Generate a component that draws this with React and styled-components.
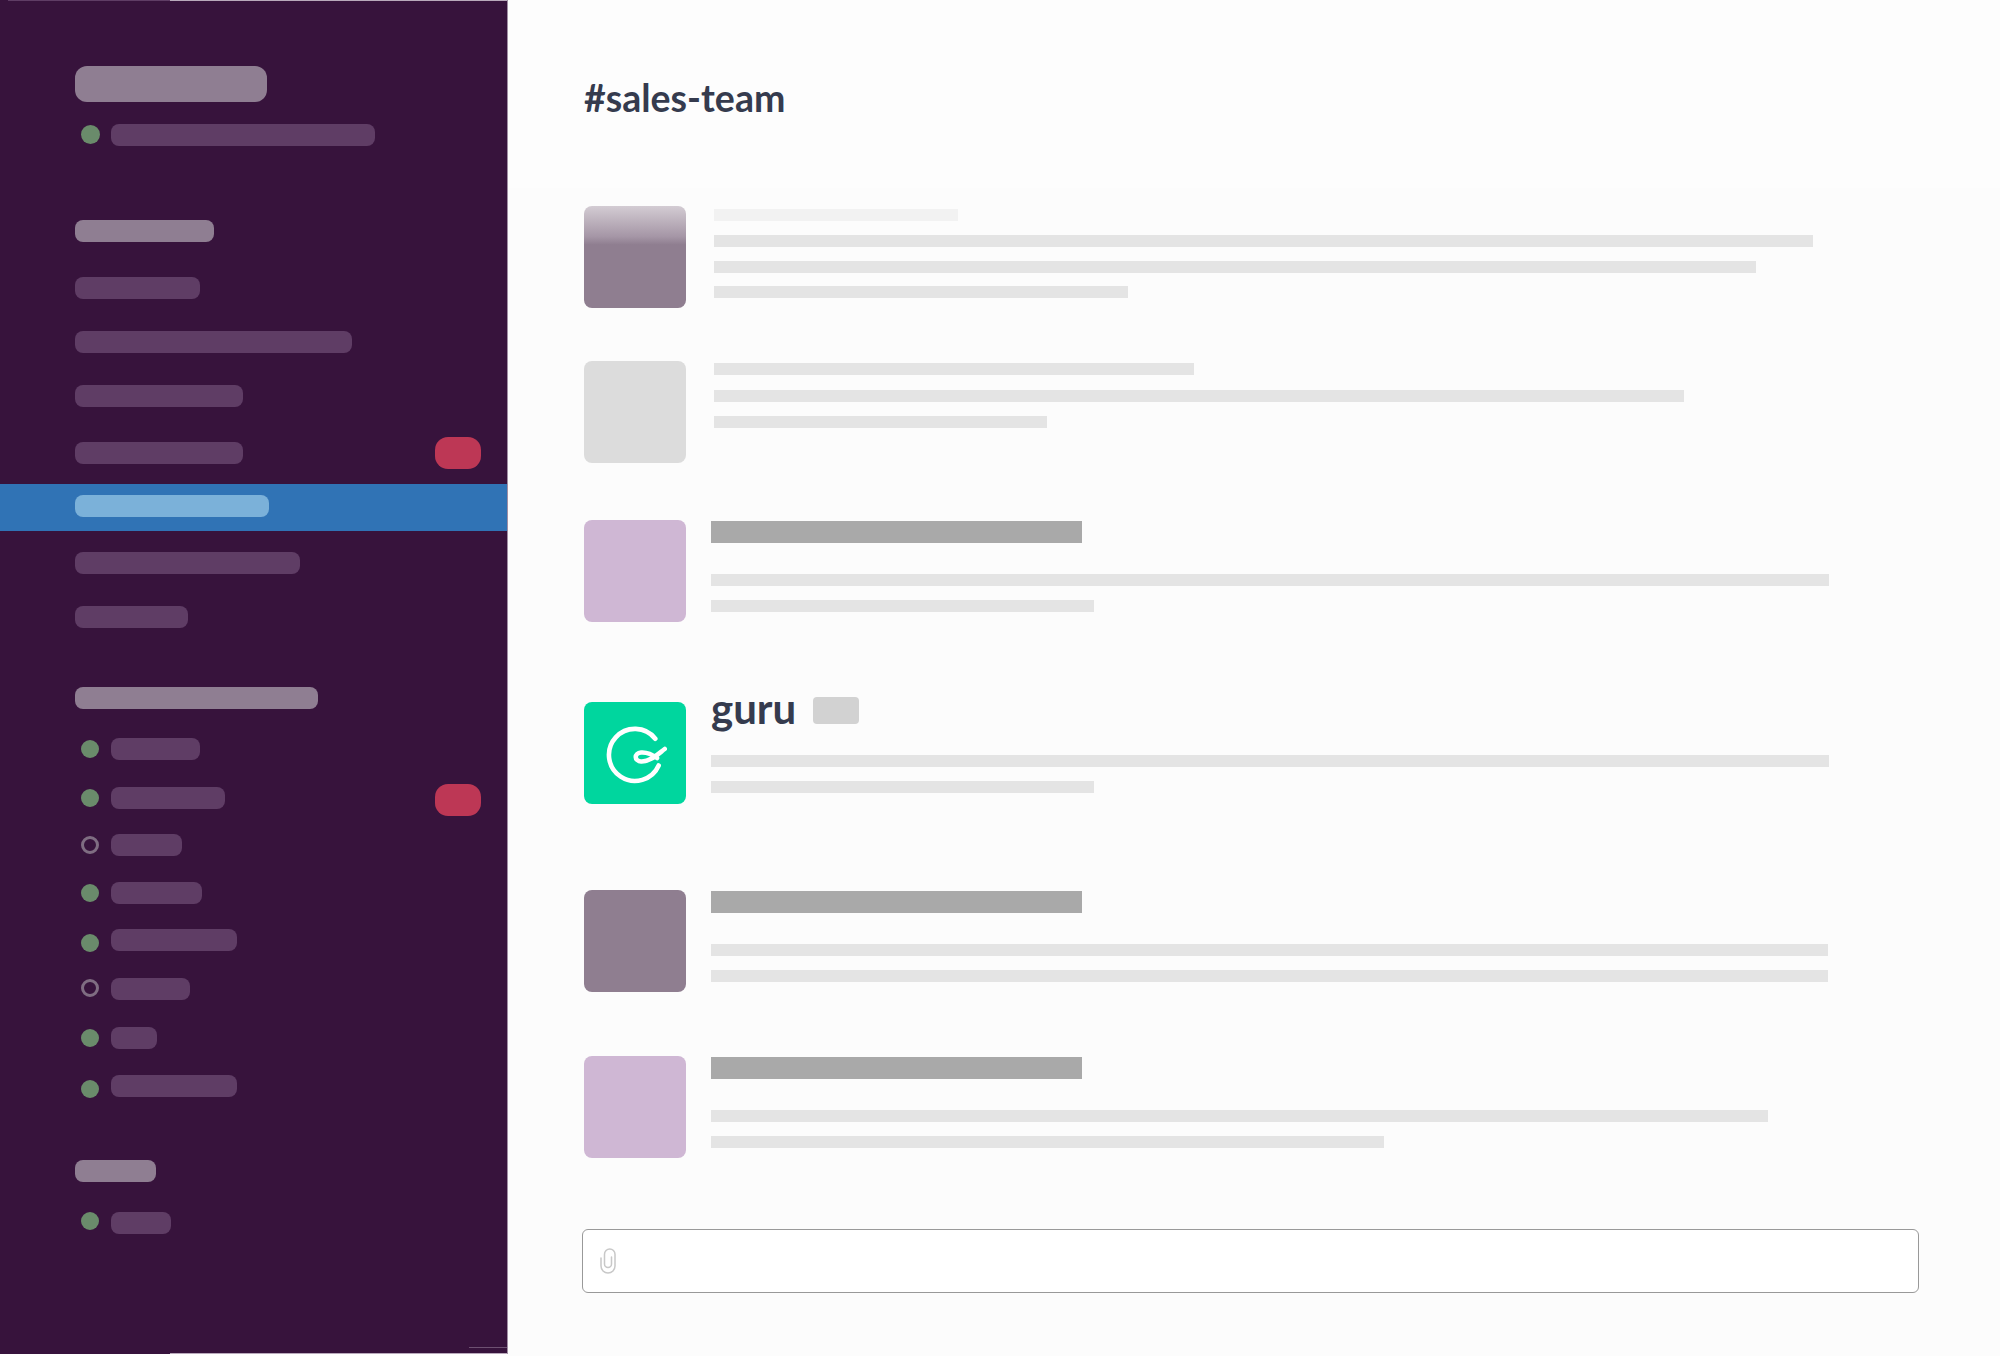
import React from "react";
import styled, { createGlobalStyle } from "styled-components";

const GlobalStyle = createGlobalStyle`
  html, body {
    margin: 0;
    padding: 0;
    background: #fefefe;
    font-family: "Lato", "Liberation Sans", sans-serif;
  }
`;

const Page = styled.div`
  display: flex;
  width: 2000px;
  height: 1356px;
  overflow: hidden;
`;

const Sidebar = styled.aside`
  position: relative;
  display: flex;
  flex-direction: column;
  flex-shrink: 0;
  box-sizing: border-box;
  width: 508px;
  height: 1354px;
  padding-top: 66px;
  background: #37133c;
  border-right: 1px solid #a08ea3;
`;

// hairlines left over from the original image's crop
const EdgeLine = styled.span`
  position: absolute;
  left: ${(p) => p.$left}px;
  right: ${(p) => p.$right ?? 0}px;
  top: ${(p) => p.$top}px;
  height: 1px;
  background: ${(p) => p.$color};
`;

const SideRow = styled.div`
  display: flex;
  align-items: center;
  justify-content: space-between;
  height: ${(p) => p.$height ?? 22}px;
  margin-top: ${(p) => p.$mt ?? 0}px;
  padding: 0 26px 0 75px;
`;

const ActiveRow = styled(SideRow)`
  box-sizing: border-box;
  height: 47px;
  padding-top: 11px;
  padding-bottom: 14px;
  background: #3073b5;
`;

const Group = styled.div`
  display: flex;
  align-items: center;
`;

const Bar = styled.span`
  display: block;
  width: ${(p) => p.$w}px;
  height: ${(p) => p.$h ?? 22}px;
  border-radius: ${(p) => p.$r ?? 8}px;
  background: ${(p) =>
    p.$kind === "bright" ? "#8f7e92" : p.$kind === "active" ? "#7bb1d9" : "#5f3d65"};
`;

const Badge = styled.span`
  display: block;
  width: 46px;
  height: 32px;
  margin-top: ${(p) => p.$mt ?? 0}px;
  border-radius: 13px;
  background: #bd3755;
`;

const Dot = styled.span`
  display: block;
  box-sizing: border-box;
  width: ${(p) => p.$size ?? 18}px;
  height: ${(p) => p.$size ?? 18}px;
  margin: ${(p) => p.$mt ?? 0}px ${(p) => 36 - 6 - (p.$size ?? 18)}px 0 6px;
  border-radius: 50%;
  background: ${(p) => (p.$away ? "transparent" : "#6a8b6b")};
  border: ${(p) => (p.$away ? "3px solid #7f6d82" : "none")};
`;

const Main = styled.main`
  flex: 1;
  display: flex;
  flex-direction: column;
  background: #fcfcfc;
`;

const Header = styled.header`
  box-sizing: border-box;
  height: 188px;
  padding: 74px 0 0 76px;
  background: #fdfdfd;
`;

const Title = styled.h1`
  margin: 0;
  font-size: 37.5px;
  line-height: 48px;
  font-weight: 700;
  color: #353b4e;
`;

const Messages = styled.div`
  display: flex;
  flex-direction: column;
  padding-left: 76px;
`;

const Message = styled.div`
  display: flex;
  align-items: flex-start;
  height: 102px;
  margin-top: ${(p) => p.$mt}px;
`;

const Avatar = styled.div`
  display: flex;
  flex-shrink: 0;
  width: 102px;
  height: 102px;
  border-radius: 8px;
  overflow: hidden;
  background: ${(p) => p.$bg};
`;

const Body = styled.div`
  display: flex;
  flex-direction: column;
  align-items: flex-start;
  margin-top: ${(p) => p.$mt ?? 1}px;
  margin-left: ${(p) => p.$ml ?? 25}px;
`;

const Line = styled.span`
  display: block;
  width: ${(p) => p.$w}px;
  height: 12px;
  margin-top: ${(p) => p.$mt ?? 14}px;
  background: ${(p) => p.$color ?? "#e4e4e4"};
`;

const Heading = styled.span`
  display: block;
  width: 371px;
  height: 22px;
  background: #a9a9a9;
`;

const NameRow = styled.div`
  display: flex;
  align-items: center;
  height: 27px;
`;

const Name = styled.span`
  width: 84px;
  margin: 0 18px 5px 0;
  font-size: 42px;
  line-height: 27px;
  font-weight: 700;
  color: #353b4e;
`;

const Tag = styled.span`
  display: block;
  width: 46px;
  height: 27px;
  border-radius: 4px;
  background: #d2d2d2;
`;

const Composer = styled.div`
  display: flex;
  align-items: center;
  box-sizing: border-box;
  width: 1337px;
  height: 64px;
  margin: 71px 0 0 74px;
  padding-left: 17px;
  background: #fff;
  border: 1px solid #999;
  border-radius: 6px;
`;

const GuruLogo = () => (
  <svg width="102" height="102" viewBox="0 0 102 102" fill="none" stroke="#fff" strokeWidth="4.6" strokeLinecap="round">
    <path d="M71.3 36.7A26 26 0 1 0 74.7 63.5" />
    <path d="M80.7 47C74 52 66 60 57 59.5C50 59 50 51 57 50.5C63 50 69 53 73 56" />
  </svg>
);

const ClipIcon = () => (
  <svg width="16" height="26" viewBox="0 0 16 26" fill="none" stroke="#c8c8c8" strokeWidth="1.5" strokeLinecap="round">
    <path d="M1 10V18A7 7 0 0 0 15 18V6.25A5.25 5.25 0 0 0 4.5 6.25V16A3.5 3.5 0 0 0 11.5 16V9" />
  </svg>
);

const dmRows = [
  { mt: 29, w: 89 },
  { mt: 27, w: 114, badge: true },
  { mt: 25, w: 71, away: true },
  { mt: 26, w: 91, dotMt: -1 },
  { mt: 25, w: 126, dotMt: 5 },
  { mt: 27, w: 79, away: true, dotMt: -2 },
  { mt: 27, w: 46 },
  { mt: 26, w: 126, dotMt: 5 },
];

const App = () => (
  <Page>
    <GlobalStyle />
    <Sidebar>
      <EdgeLine $left={8} $right={337} $top={0} $color="#5f3d65" />
      <EdgeLine $left={170} $top={0} $color="#b9a9bb" />
      <EdgeLine $left={170} $top={1353} $color="#b9a9bb" />
      <EdgeLine $left={469} $top={1347} $color="#6d5071" />

      <SideRow $height={36}>
        <Bar $kind="bright" $w={192} $h={36} $r={12} />
      </SideRow>
      <SideRow $mt={22}>
        <Group>
          <Dot $size={19} $mt={-1} />
          <Bar $w={264} />
        </Group>
      </SideRow>

      <SideRow $mt={74}><Bar $kind="bright" $w={139} /></SideRow>
      <SideRow $mt={35}><Bar $w={125} /></SideRow>
      <SideRow $mt={32}><Bar $w={277} /></SideRow>
      <SideRow $mt={32}><Bar $w={168} /></SideRow>
      <SideRow $mt={35}>
        <Bar $w={168} />
        <Badge />
      </SideRow>
      <ActiveRow $mt={20}><Bar $kind="active" $w={194} /></ActiveRow>
      <SideRow $mt={21}><Bar $w={225} /></SideRow>
      <SideRow $mt={32}><Bar $w={113} /></SideRow>

      <SideRow $mt={59}><Bar $kind="bright" $w={243} /></SideRow>
      {dmRows.map((row, i) => (
        <SideRow key={i} $mt={row.mt}>
          <Group>
            <Dot $away={row.away} $mt={row.dotMt} />
            <Bar $w={row.w} />
          </Group>
          {row.badge && <Badge $mt={3} />}
        </SideRow>
      ))}

      <SideRow $mt={63}><Bar $kind="bright" $w={81} /></SideRow>
      <SideRow $mt={30}>
        <Group>
          <Dot $mt={-4} />
          <Bar $w={60} />
        </Group>
      </SideRow>
    </Sidebar>

    <Main>
      <Header>
        <Title>#sales-team</Title>
      </Header>

      <Messages>
        <Message $mt={18}>
          <Avatar $bg="linear-gradient(180deg, #d3ccd3 0%, #a596a6 30%, #8f7e90 38%)" />
          <Body $ml={28} $mt={0}>
            <Line $w={244} $mt={3} $color="#f2f2f2" />
            <Line $w={1099} />
            <Line $w={1042} />
            <Line $w={414} $mt={13} />
          </Body>
        </Message>

        <Message $mt={53}>
          <Avatar $bg="#dcdcdc" />
          <Body $ml={28} $mt={0}>
            <Line $w={480} $mt={2} />
            <Line $w={970} $mt={15} />
            <Line $w={333} />
          </Body>
        </Message>

        <Message $mt={57}>
          <Avatar $bg="#cfb7d4" />
          <Body>
            <Heading />
            <Line $w={1118} $mt={31} />
            <Line $w={383} />
          </Body>
        </Message>

        <Message $mt={80}>
          <Avatar $bg="#00d69e">
            <GuruLogo />
          </Avatar>
          <Body $mt={-5}>
            <NameRow>
              <Name>guru</Name>
              <Tag />
            </NameRow>
            <Line $w={1118} $mt={31} />
            <Line $w={383} />
          </Body>
        </Message>

        <Message $mt={86}>
          <Avatar $bg="#8f7e90" />
          <Body>
            <Heading />
            <Line $w={1117} $mt={31} />
            <Line $w={1117} />
          </Body>
        </Message>

        <Message $mt={64}>
          <Avatar $bg="#cfb7d4" />
          <Body>
            <Heading />
            <Line $w={1057} $mt={31} />
            <Line $w={673} />
          </Body>
        </Message>
      </Messages>

      <Composer>
        <ClipIcon />
      </Composer>
    </Main>
  </Page>
);

export default App;
